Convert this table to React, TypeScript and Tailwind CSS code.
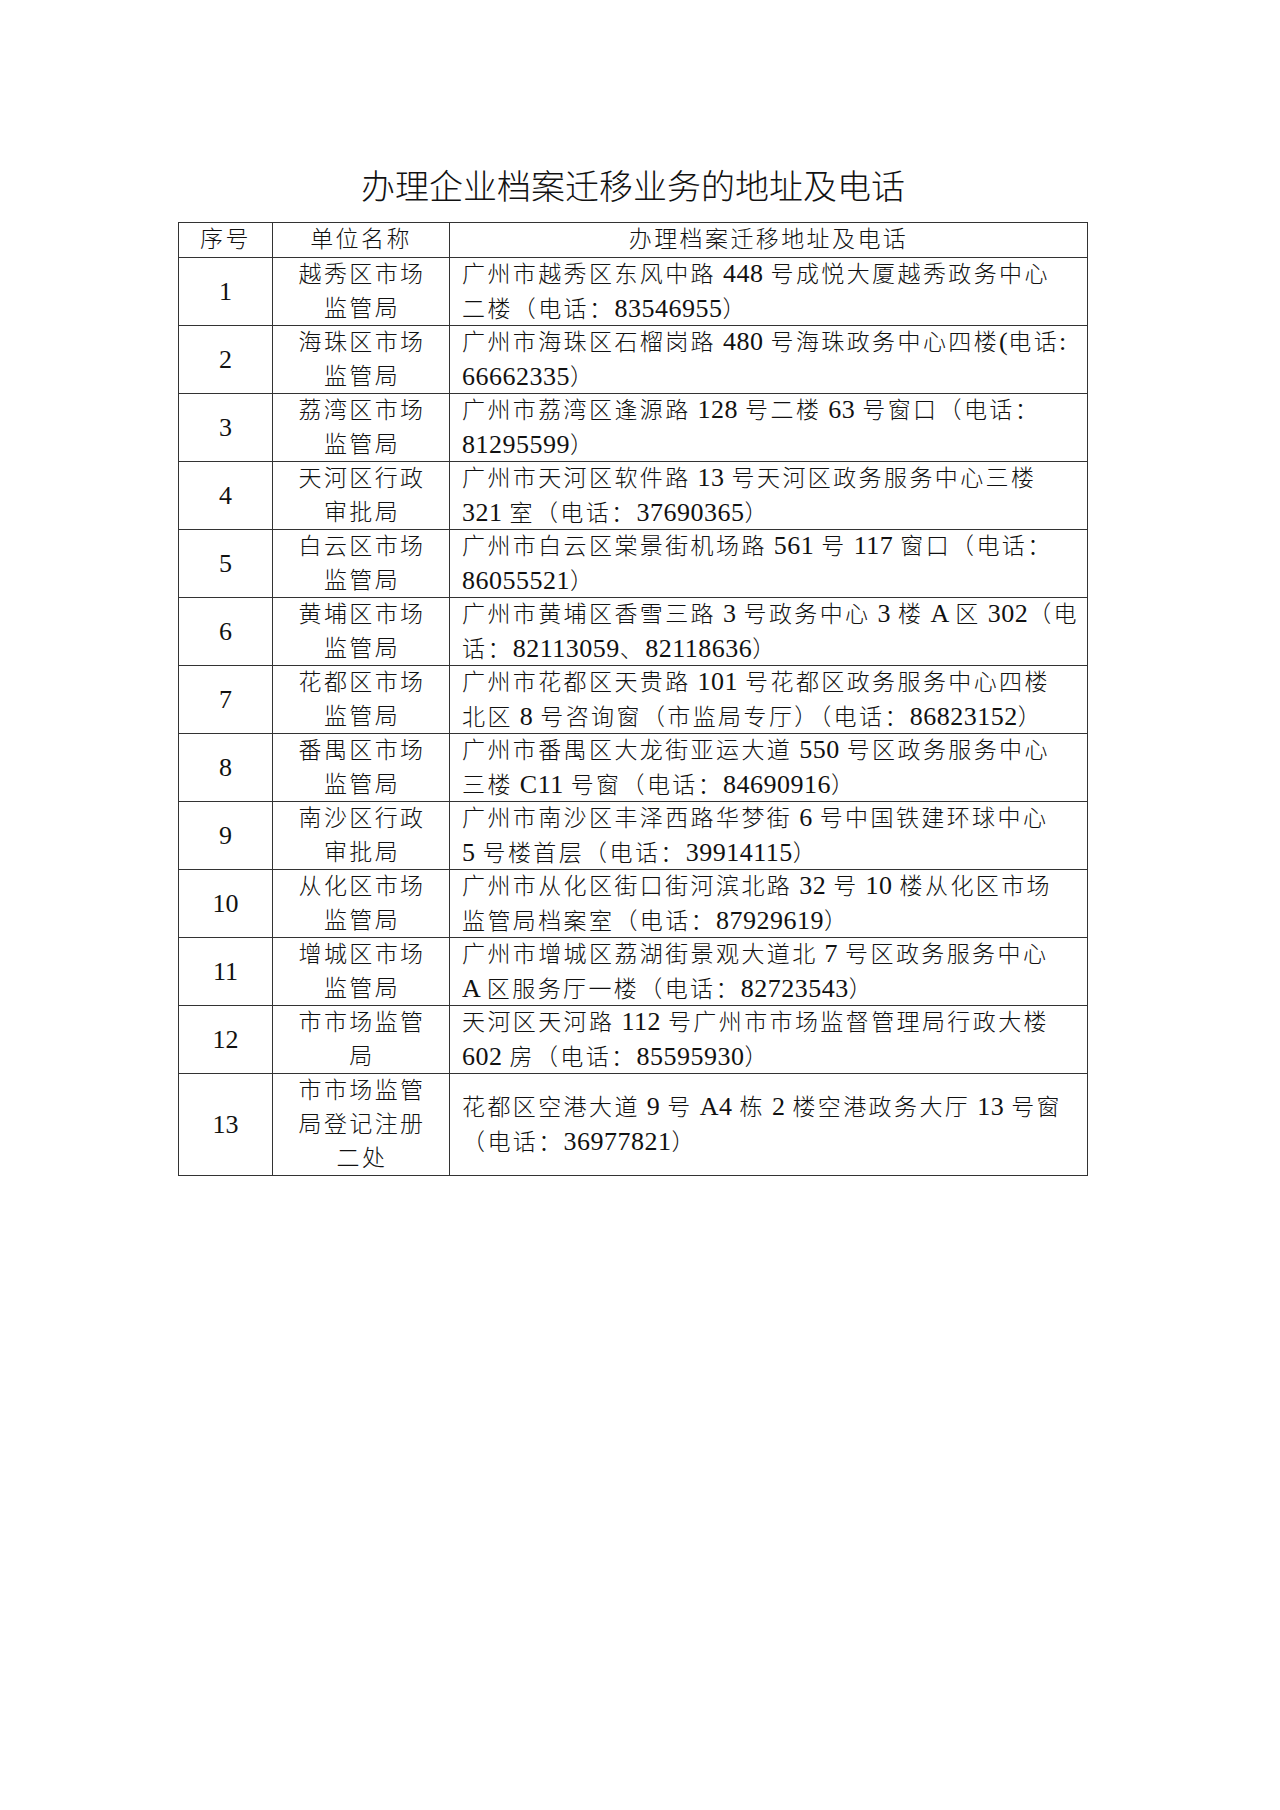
import React from 'react';

type Row = {
  no: string;
  name: string[];
  addr: string[];
  tall?: boolean;
};

const rows: Row[] = [
  { no: '1', name: ['越秀区市场', '监管局'], addr: ['广州市越秀区东风中路 448 号成悦大厦越秀政务中心', '二楼（电话：83546955）'] },
  { no: '2', name: ['海珠区市场', '监管局'], addr: ['广州市海珠区石榴岗路 480 号海珠政务中心四楼(电话:', '66662335）'] },
  { no: '3', name: ['荔湾区市场', '监管局'], addr: ['广州市荔湾区逢源路 128 号二楼 63 号窗口（电话：', '81295599）'] },
  { no: '4', name: ['天河区行政', '审批局'], addr: ['广州市天河区软件路 13 号天河区政务服务中心三楼', '321 室（电话：37690365）'] },
  { no: '5', name: ['白云区市场', '监管局'], addr: ['广州市白云区棠景街机场路 561 号 117 窗口（电话：', '86055521）'] },
  { no: '6', name: ['黄埔区市场', '监管局'], addr: ['广州市黄埔区香雪三路 3 号政务中心 3 楼 A 区 302（电', '话：82113059、82118636）'] },
  { no: '7', name: ['花都区市场', '监管局'], addr: ['广州市花都区天贵路 101 号花都区政务服务中心四楼', '北区 8 号咨询窗（市监局专厅）（电话：86823152）'] },
  { no: '8', name: ['番禺区市场', '监管局'], addr: ['广州市番禺区大龙街亚运大道 550 号区政务服务中心', '三楼 C11 号窗（电话：84690916）'] },
  { no: '9', name: ['南沙区行政', '审批局'], addr: ['广州市南沙区丰泽西路华梦街 6 号中国铁建环球中心', '5 号楼首层（电话：39914115）'] },
  { no: '10', name: ['从化区市场', '监管局'], addr: ['广州市从化区街口街河滨北路 32 号 10 楼从化区市场', '监管局档案室（电话：87929619）'] },
  { no: '11', name: ['增城区市场', '监管局'], addr: ['广州市增城区荔湖街景观大道北 7 号区政务服务中心', 'A 区服务厅一楼（电话：82723543）'] },
  { no: '12', name: ['市市场监管', '局'], addr: ['天河区天河路 112 号广州市市场监督管理局行政大楼', '602 房（电话：85595930）'] },
  { no: '13', name: ['市市场监管', '局登记注册', '二处'], addr: ['花都区空港大道 9 号 A4 栋 2 楼空港政务大厅 13 号窗', '（电话：36977821）'], tall: true },
];

const font = { fontFamily: '"Liberation Serif", "Noto Sans CJK SC", serif' };

// latin runs (digits, letters, half-width punctuation) are set a bit larger, like Times next to SimSun
const Mixed = ({ text }: { text: string }) => (
  <>
    {text.split(/([\x00-\x7F]+)/).map((part, i) =>
      /^[\x00-\x7F]+$/.test(part) ? (
        <span key={i} className="text-[26px] tracking-[0.5px] font-normal">{part}</span>
      ) : (
        <span key={i}>{part}</span>
      )
    )}
  </>
);

export default function App() {
  return (
    <div className="w-[1280px] min-h-[1810px] bg-white text-[#111]" style={font}>
      <div className="pt-[170px] ml-[178px] w-[910px]">
        {/* Title */}
        <h1 className="text-center text-[34px] leading-[36px] font-light mb-[16px]">
          办理企业档案迁移业务的地址及电话
        </h1>

        {/* Table */}
        <div className="grid grid-cols-[94px_177px_638px] border-t border-l border-[#333] text-[23px] leading-[34px] tracking-[2.4px] font-light">
          <div className="h-[35px] border-r border-b border-[#333] flex items-center justify-center whitespace-nowrap">
            序号
          </div>
          <div className="h-[35px] border-r border-b border-[#333] flex items-center justify-center whitespace-nowrap">
            单位名称
          </div>
          <div className="h-[35px] border-r border-b border-[#333] flex items-center justify-center whitespace-nowrap">
            办理档案迁移地址及电话
          </div>

          {rows.map((r) => {
            const h = r.tall ? 'h-[102px]' : 'h-[68px]';
            return (
              <React.Fragment key={r.no}>
                <div className={`${h} border-r border-b border-[#333] flex items-center justify-center text-[26px] tracking-normal font-normal`}>
                  {r.no}
                </div>
                <div className={`${h} border-r border-b border-[#333] flex flex-col items-center justify-center text-center`}>
                  {r.name.map((n, i) => (
                    <div key={i} className="whitespace-nowrap pl-[2px]">{n}</div>
                  ))}
                </div>
                <div className={`${h} border-r border-b border-[#333] flex flex-col justify-center pl-[12px]`}>
                  {r.addr.map((a, i) => (
                    <div key={i} className="whitespace-pre">
                      <Mixed text={a} />
                    </div>
                  ))}
                </div>
              </React.Fragment>
            );
          })}
        </div>
      </div>
    </div>
  );
}
